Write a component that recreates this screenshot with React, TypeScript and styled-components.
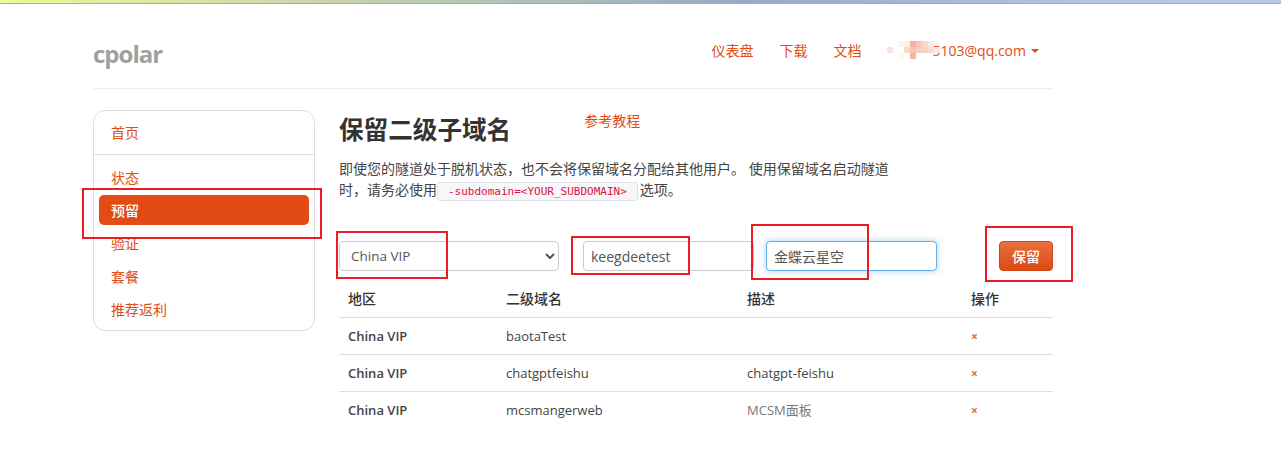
import React from "react";
import styled, { createGlobalStyle } from "styled-components";

const GlobalStyle = createGlobalStyle`
  html, body {
    margin: 0;
    padding: 0;
    background: #fff;
    overflow: hidden;
  }
  body {
    font-family: "Open Sans", "Noto Sans CJK SC", sans-serif;
    font-size: 14px;
    color: #333;
  }
  * {
    box-sizing: border-box;
  }
`;

const accent = "#e04c14";

const Page = styled.div`
  position: relative;
  width: 1281px;
  height: 456px;
  overflow: hidden;
`;
const TopStrip = styled.div`
  height: 4px;
  border-bottom: 1px solid #a9ad9e;
  background: linear-gradient(90deg, #eef99a 0%, #c0cfb0 30%, #98a9c4 58%, #b6c3e2 85%, #bcc8e6 100%);
`;
const Container = styled.div`
  width: 960px;
  margin-left: 93px;
`;
const Header = styled.header`
  height: 85px;
  display: flex;
  align-items: center;
  justify-content: space-between;
  border-bottom: 1px solid #eee;
  padding-top: 8px;
`;
const Logo = styled.div`
  margin-top: 6px;
  font-size: 24px;
  font-weight: 700;
  color: #a0a0a0;
  letter-spacing: -1px;
`;
const TopNav = styled.nav`
  display: flex;
  align-items: center;
  padding-right: 14px;
`;
const TopLink = styled.a`
  color: ${accent};
  font-size: 14px;
  margin-left: 26px;
`;
const UserMenu = styled.div`
  display: flex;
  align-items: center;
  margin-left: 24px;
  color: ${accent};
  font-size: 14px;
`;
const MosaicSvg = styled.svg`
  position: relative;
  z-index: 1;
  margin-right: -7px;
`;
const Caret = styled.span`
  width: 0;
  height: 0;
  margin-left: 5px;
  margin-top: 2px;
  border-left: 4px solid transparent;
  border-right: 4px solid transparent;
  border-top: 4px solid ${accent};
`;
const Body = styled.div`
  display: flex;
  align-items: flex-start;
  gap: 24px;
  margin-top: 21px;
`;
const Sidebar = styled.aside`
  width: 222px;
  height: 221px;
  flex: none;
  border: 1px solid #ddd;
  border-radius: 12px;
  padding: 6px 5px 5px;
`;
const SideItem = styled.a<{ $active?: boolean }>`
  display: flex;
  align-items: center;
  height: 30px;
  padding: 0 0 1px 12px;
  font-size: 14px;
  font-weight: ${(props) => (props.$active ? 500 : 400)};
  border-radius: 5px;
  margin-bottom: 3px;
  color: ${(props) => (props.$active ? "#fff" : accent)};
  background: ${(props) => (props.$active ? accent : "transparent")};
`;
const SideDivider = styled.div`
  height: 1px;
  background: #ddd;
  margin: 7px -5px 7px;
`;
const Main = styled.main`
  width: 714px;
  flex: none;
`;
const TitleRow = styled.div`
  display: flex;
  align-items: flex-start;
  height: 38px;
`;
const Title = styled.h1`
  margin: 3px 0 0;
  font-size: 24.6px;
  line-height: 34px;
  font-weight: 700;
  color: #333;
`;
const Tutorial = styled.a`
  color: ${accent};
  font-size: 14px;
  margin-left: 73px;
`;
const Intro = styled.p`
  margin: 10px 0 0;
  width: 560px;
  font-size: 14px;
  line-height: 21px;
  color: #444;
`;
const Code = styled.code`
  font-family: "DejaVu Sans Mono", monospace;
  font-size: 11px;
  color: #dd1144;
  background: #f7f7f9;
  border: 1px solid #e1e1e8;
  border-radius: 3px;
  padding: 2px 10px;
  margin-right: 2px;
`;
const FormRow = styled.form`
  display: flex;
  align-items: center;
  height: 32px;
  margin-top: 38px;
`;
const SelectBox = styled.select`
  width: 220px;
  height: 30px;
  border: 1px solid #ccc;
  border-radius: 4px;
  background: #fff;
  color: #555;
  font: 13.5px "Open Sans", sans-serif;
  padding: 0 7px;
  margin-right: 24px;
`;
const TextBox = styled.input<{ $focus?: boolean }>`
  height: 30px;
  border: 1px solid ${(props) => (props.$focus ? "#66afe9" : "#ccc")};
  border-radius: 4px;
  color: #555;
  font: 14px "Open Sans", "Noto Sans CJK SC", sans-serif;
  padding: 0 7px;
  outline: none;
  box-shadow: ${(props) => (props.$focus ? "0 0 6px rgba(102, 175, 233, 0.6)" : "none")};
`;
const SubdomainBox = styled(TextBox)`
  width: 171px;
  margin-right: 12px;
`;
const DescBox = styled(TextBox)`
  width: 171px;
`;
const SaveButton = styled.button`
  width: 54px;
  height: 30px;
  margin-left: 62px;
  border: 1px solid #d0470f;
  border-radius: 4px;
  color: #fff;
  font: 500 14px "Open Sans", "Noto Sans CJK SC", sans-serif;
  background: linear-gradient(180deg, #ea6f3f 0%, #dc4a12 100%);
`;
const Table = styled.table`
  width: 100%;
  border-collapse: collapse;
  margin-top: 7px;
  table-layout: fixed;
  font-size: 13px;
`;
const HeadCell = styled.th<{ $w: number }>`
  width: ${(props) => props.$w}px;
  height: 38px;
  text-align: left;
  font-size: 14px;
  font-weight: 500;
  padding: 0 9px;
  color: #333;
  border-bottom: 1px solid #ddd;
`;
const Cell = styled.td<{ $bold?: boolean; $muted?: boolean }>`
  height: 37px;
  padding: 0 9px;
  font-weight: ${(props) => (props.$bold ? 600 : 400)};
  color: ${(props) => (props.$muted ? "#777" : "#444")};
  border-bottom: 1px solid #ddd;
`;
const LastCell = styled(Cell)`
  border-bottom: none;
`;
const Remove = styled.span`
  color: #e8683a;
  font-size: 12px;
  font-weight: 700;
`;
const Mark = styled.div<{ $x: number; $y: number; $w: number; $h: number }>`
  position: absolute;
  left: ${(props) => props.$x}px;
  top: ${(props) => props.$y}px;
  width: ${(props) => props.$w}px;
  height: ${(props) => props.$h}px;
  border: 2px solid #ed1c24;
  pointer-events: none;
`;

// the mosaic that hides the start of the address
function Mosaic() {
  const cells: [number, number, string][] = [
    [1, 6, "#fbe3da"],
    [12, 0, "#fdf3ee"],
    [18, 0, "#fdf0ea"],
    [24, 0, "#f4b29a"],
    [30, 0, "#f8c8b6"],
    [36, 0, "#fad6c8"],
    [42, 0, "#fde9e2"],
    [18, 6, "#fad9cc"],
    [24, 6, "#f7c6b2"],
    [30, 6, "#f9cdbb"],
    [36, 6, "#f8d3c5"],
    [42, 6, "#fbdcd0"],
    [48, 6, "#fce6de"],
    [12, 12, "#fef6f3"],
    [24, 12, "#f4b69e"],
  ];
  return (
    <MosaicSvg width="54" height="18" viewBox="0 0 54 18" aria-hidden="true">
      {cells.map(([x, y, fill]) => (
        <rect key={`${x}-${y}`} x={x} y={y} width="6" height="6" fill={fill} />
      ))}
    </MosaicSvg>
  );
}

const rows = [
  { region: "China VIP", name: "baotaTest", desc: "" },
  { region: "China VIP", name: "chatgptfeishu", desc: "chatgpt-feishu" },
  { region: "China VIP", name: "mcsmangerweb", desc: "MCSM面板" },
];

function App() {
  return (
    <Page>
      <GlobalStyle />
      <TopStrip />
      <Container>
        <Header>
          <Logo>cpolar</Logo>
          <TopNav>
            <TopLink>仪表盘</TopLink>
            <TopLink>下载</TopLink>
            <TopLink>文档</TopLink>
            <UserMenu>
              <Mosaic />
              5103@qq.com
              <Caret />
            </UserMenu>
          </TopNav>
        </Header>
        <Body>
          <Sidebar>
            <SideItem>首页</SideItem>
            <SideDivider />
            <SideItem>状态</SideItem>
            <SideItem $active>预留</SideItem>
            <SideItem>验证</SideItem>
            <SideItem>套餐</SideItem>
            <SideItem>推荐返利</SideItem>
          </Sidebar>
          <Main>
            <TitleRow>
              <Title>保留二级子域名</Title>
              <Tutorial>参考教程</Tutorial>
            </TitleRow>
            <Intro>
              即使您的隧道处于脱机状态，也不会将保留域名分配给其他用户。 使用保留域名启动隧道时，请务必使用
              <Code>-subdomain=&lt;YOUR_SUBDOMAIN&gt;</Code>
              选项。
            </Intro>
            <FormRow>
              <SelectBox defaultValue="China VIP">
                <option>China VIP</option>
              </SelectBox>
              <SubdomainBox defaultValue="keegdeetest" />
              <DescBox $focus defaultValue="金蝶云星空" />
              <SaveButton type="button">保留</SaveButton>
            </FormRow>
            <Table>
              <thead>
                <tr>
                  <HeadCell $w={158}>地区</HeadCell>
                  <HeadCell $w={241}>二级域名</HeadCell>
                  <HeadCell $w={224}>描述</HeadCell>
                  <HeadCell $w={91}>操作</HeadCell>
                </tr>
              </thead>
              <tbody>
                {rows.map((row, i) => {
                  const Td = i === rows.length - 1 ? LastCell : Cell;
                  return (
                    <tr key={row.name}>
                      <Td $bold>{row.region}</Td>
                      <Td>{row.name}</Td>
                      <Td $muted={i === 2}>{row.desc}</Td>
                      <Td>
                        <Remove>×</Remove>
                      </Td>
                    </tr>
                  );
                })}
              </tbody>
            </Table>
          </Main>
        </Body>
      </Container>
      <Mark $x={82} $y={188} $w={240} $h={51} />
      <Mark $x={336} $y={231} $w={112} $h={48} />
      <Mark $x={571} $y={236} $w={119} $h={39} />
      <Mark $x={751} $y={224} $w={118} $h={56} />
      <Mark $x={985} $y={226} $w={88} $h={56} />
    </Page>
  );
}

export default App;
